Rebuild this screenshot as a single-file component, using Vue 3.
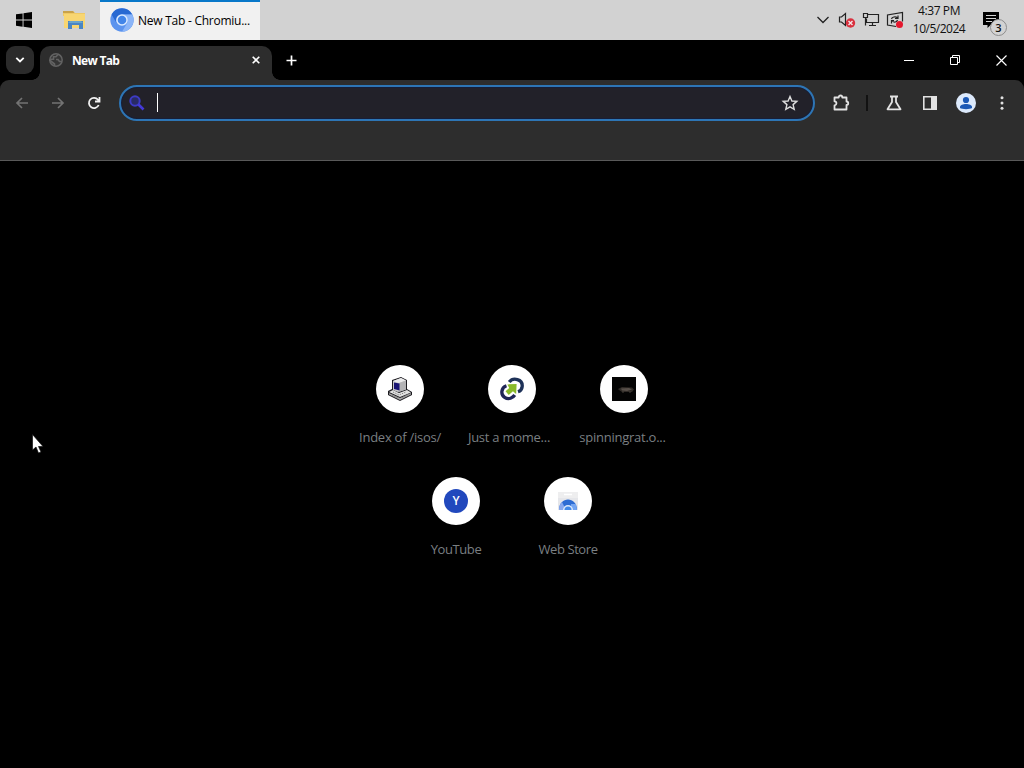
<template>
  <div class="desktop">
    <header class="taskbar">
      <button class="task start" aria-label="Start">
        <svg width="16" height="16" viewBox="0 0 16 16"><path d="M0 2.3 6.6 1.4V7.6H0ZM7.5 1.3 16 0V7.6H7.5ZM0 8.5H6.6V14.7L0 13.8ZM7.5 8.5H16V16L7.5 14.8Z" /></svg>
      </button>
      <button class="task explorer" aria-label="File Explorer">
        <svg width="24" height="20" viewBox="0 0 24 20">
          <path d="M1 1h10l2 2h10v3H1z" fill="#efc964" />
          <path d="M1 1h10l1.500 2H1z" fill="#c9a24a" />
          <path d="M2 4h21v14H2z" fill="#f8d672" />
          <path d="M6 11h15v8h-4v-4h-7v4H6z" fill="#4a86c4" />
          <path d="M8 11h11l2 2H6z" fill="#6aa5cc" />
        </svg>
      </button>
      <button class="task active">
        <svg width="24" height="24" viewBox="0 0 24 24">
          <circle cx="12" cy="12" r="11.700" fill="#5b93ee" />
          <path d="M1.600 6.500A11.700 11.700 0 0 1 22.200 6.500H12a6 6 0 0 0-5.200 9z" fill="#2869d2" />
          <path d="M22.200 6.500A11.700 11.700 0 0 1 12 23.700l5.200-8.700A6 6 0 0 0 12 6.500z" fill="#8bb5f8" />
          <circle cx="12" cy="12" r="5.800" fill="#dcebff" />
          <circle cx="12" cy="12" r="4.300" fill="#4285e8" />
        </svg>
        <span>New Tab - Chromiu...</span>
      </button>

      <div class="tray">
        <svg class="tray-arrow" width="14" height="10" viewBox="0 0 14 10"><path d="m1.500 2 5.500 5.500L12.500 2" fill="none" stroke="#222" stroke-width="1.300" /></svg>
        <svg width="18" height="16" viewBox="0 0 18 16">
          <path d="M1.500 5h2L7.500 1.500v12L3.500 10h-2z" fill="none" stroke="#222" stroke-width="1.200" />
          <circle cx="12.500" cy="11" r="4.700" fill="#d9303e" />
          <path d="m10.500 9 4 4m0-4-4 4" stroke="#f3e6e7" stroke-width="1.400" />
        </svg>
        <svg width="18" height="16" viewBox="0 0 18 16">
          <path d="M5 2.500h11.500v8H4.500v-4M10.500 10.500v3M7 13.500h7M1.500 1.500h4v4h-4zM3.500 5.500v8" fill="none" stroke="#222" stroke-width="1.200" />
        </svg>
        <svg width="18" height="18" viewBox="0 0 18 18">
          <path d="M10 15.500 1.500 14V4L16.500 1.500v9" fill="none" stroke="#222" stroke-width="1.200" />
          <path d="M5.500 8c.5-2 4-3 6-1M12 4.500v3H9M11.500 9c-.5 2-3.500 3-5 1M5.500 12.500v-3H8" fill="none" stroke="#222" stroke-width="1.200" />
          <circle cx="13.500" cy="13.500" r="3.500" fill="#e5172e" />
        </svg>
      </div>
      <div class="clock">
        <span class="time">4:37 PM</span>
        <span class="date">10/5/2024</span>
      </div>
      <div class="notifications">
        <svg width="17" height="17" viewBox="0 0 17 17"><path d="M0 0h16v13H7.500L4.500 16v-3H0z" /><path d="M3 3.500h10M3 6.500h10M3 9.500h6" stroke="#d3d3d3" stroke-width="1.200" /></svg>
        <span class="count">3</span>
      </div>
    </header>

    <main class="browser">
      <div class="tabstrip">
        <button class="tab-search" aria-label="Search tabs">
          <svg width="10" height="8" viewBox="0 0 10 8"><path d="m1.300 1.800 3.700 3.700 3.700-3.700" fill="none" stroke="#fff" stroke-width="1.800" /></svg>
        </button>
        <div class="tab">
          <svg width="14" height="14" viewBox="0 0 14 14">
            <circle cx="7" cy="7" r="6.200" fill="#353535" stroke="#626262" stroke-width="1.500" />
            <path d="M9 1.500 7 3.800H4.500v2.500H2L1 7.500 5.500 11v2M7 6.500h2l1.500 2h2.500" fill="none" stroke="#626262" stroke-width="1.600" />
          </svg>
          <span>New Tab</span>
          <svg class="close" width="8" height="8" viewBox="0 0 8 8"><path d="m.7.700 6.600 6.600m0-6.600L.7 7.300" stroke="#fff" stroke-width="1.600" /></svg>
        </div>
        <button class="new-tab" aria-label="New tab">
          <svg width="11" height="11" viewBox="0 0 11 11"><path d="M5.500.5v10M.5 5.500h10" stroke="#fff" stroke-width="1.700" /></svg>
        </button>
        <div class="window-controls">
          <svg width="10" height="10" viewBox="0 0 10 10"><path d="M0 5.500h10" stroke="#fff" /></svg>
          <svg width="10" height="10" viewBox="0 0 10 10"><path d="M.5 2.500h7v7h-7zM2.500 2.500v-2h7v7h-2" fill="none" stroke="#fff" /></svg>
          <svg width="11" height="11" viewBox="0 0 11 11"><path d="m.5.500 10 10m0-10-10 10" stroke="#fff" stroke-width="1.150" /></svg>
        </div>
      </div>

      <div class="toolbar">
        <nav class="navigation">
          <svg width="20" height="20" viewBox="0 0 20 20"><path d="M16 10H5m5-5-5 5 5 5" fill="none" stroke="#737373" stroke-width="1.700" /></svg>
          <svg width="20" height="20" viewBox="0 0 20 20"><path d="M4 10h11m-5-5 5 5-5 5" fill="none" stroke="#737373" stroke-width="1.700" /></svg>
          <svg width="20" height="20" viewBox="0 0 20 20"><path d="M14.700 12A5.100 5.100 0 1 1 14 6.700l1 1M15.500 4v4.500H11" fill="none" stroke="#f2f2f2" stroke-width="1.800" /></svg>
        </nav>
        <div class="omnibox">
          <svg class="search" width="18" height="18" viewBox="0 0 18 18"><circle cx="7" cy="7" r="4.700" fill="#292b65" stroke="#3d3bc4" stroke-width="2" /><path d="m10.500 10.500 5 5" stroke="#4439da" stroke-width="2.600" /></svg>
          <i class="caret"></i>
          <svg class="star" width="18" height="18" viewBox="0 0 18 18"><path d="m9 2.500 1.900 4.500 4.900.4-3.700 3.200 1.100 4.700L9 12.800l-4.200 2.500 1.100-4.700-3.700-3.200L7.100 7z" fill="none" stroke="#ddd" stroke-width="1.400" /></svg>
        </div>
        <svg class="extension" width="20" height="20" viewBox="0 0 20 20"><path d="M3.500 4.500h4.200C7.700 1.800 11.300 1.800 11.300 4.500h4.200v4c2.300 0 2.300 3.500 0 3.500v4.500h-12v-4c2.600-.5 2.600-4 0-4.200z" fill="none" stroke="#e2e2e2" stroke-width="1.800" stroke-linejoin="round" /></svg>
        <i class="divider"></i>
        <div class="actions">
          <svg width="20" height="20" viewBox="0 0 20 20"><path d="M6 3.500h8M8 4v5l-4.500 7.300h13L12 9V4" fill="none" stroke="#e2e2e2" stroke-width="1.800" stroke-linejoin="round" /></svg>
          <svg width="20" height="20" viewBox="0 0 20 20"><path d="M3.800 3.800h12.400v12.400H3.800z" fill="none" stroke="#e2e2e2" stroke-width="1.600" /><path d="M11 3h6v14h-6z" fill="#e2e2e2" /></svg>
          <svg width="20" height="20" viewBox="0 0 20 20"><circle cx="10" cy="10" r="10" fill="#dce9fb" /><circle cx="10" cy="7" r="3.100" fill="#1b58b5" /><path d="M4 15v-1c0-4 12-4 12 0v1c-2 1.500-10 1.500-12 0z" fill="#1b58b5" /></svg>
          <svg width="20" height="20" viewBox="0 0 20 20" fill="#e2e2e2"><circle cx="10" cy="4.800" r="1.500" /><circle cx="10" cy="10" r="1.500" /><circle cx="10" cy="15.200" r="1.500" /></svg>
        </div>
      </div>

      <section class="shortcuts">
        <a v-for="site in sites" :key="site.icon" class="shortcut" :class="site.icon">
          <span class="bubble">
            <svg v-if="site.icon === 'computer'" width="24" height="24" viewBox="0 0 24 24">
              <path d="M4 3 13 0l6 3v9l5 3v3l-12 6L0 18v-4l4-2z" fill="#1c1b20" />
              <path d="m5 4 8-3 5 2.500v9L10 15l-5-2z" fill="#c9c9cb" />
              <path d="m5 4 8-3 5 2.500-7 2.500z" fill="#e9e9ea" />
              <path d="m11 6 7-2.500v9L11 15z" fill="#b3b3b5" />
              <path d="m6 5.500 5.500 1v7l-5.500-1.500z" fill="#191473" />
              <path d="m1 15 4-2 6 3 8-3 4 2.500L12 20z" fill="#e2e2e2" />
              <path d="m1 16 11 5v2L1 17.500zM12 21l11-5v1.500L12 23z" fill="#a8a8a8" />
              <path d="m5 15 6 3 7-3M4 18l6 3M14 21l7-4" fill="none" stroke="#777" stroke-dasharray="1 1" />
            </svg>
            <svg v-else-if="site.icon === 'link'" width="24" height="24" viewBox="0 0 26 26">
              <path d="M10 5.500c4-5.500 15-3.500 14 5-.3 2.700-2 4.700-4.500 5.500" fill="none" stroke="#1d3158" stroke-width="3.600" />
              <path d="M7 9.500C1 11.500.5 19 5 22c4.500 3 9 .5 11-2.500" fill="none" stroke="#202657" stroke-width="3.600" />
              <path d="m8 8 10-.5-.5 11-3.500-3-4.500 4-3.500-4 4-3.500z" fill="#8abb2a" />
            </svg>
            <svg v-else-if="site.icon === 'rat'" width="24" height="24" viewBox="0 0 24 24">
              <path d="M0 0h24v24H0z" fill="#040404" />
              <path d="m6 12 4-2 10 .5 2 2-2 2.500H10l-3-2z" fill="#2f2a26" />
              <path d="m9 11.500 8-.5 3 1.500-5 1.500-5-.5z" fill="#58504a" /><path d="M10 15h2m5 0h2" stroke="#46413a" />
            </svg>
            <span v-else-if="site.icon === 'youtube'" class="letter">Y</span>
            <svg v-else width="22" height="20" viewBox="0 0 22 20">
              <path d="M1 1h20v18H1z" fill="#e5e6ea" /><path d="M1 1h20v6H1z" fill="#eeeeef" /><path d="M7 3.500h8" stroke="#fff" stroke-width="1.500" />
              <path d="M2 19C2 5 20 5 20 19z" fill="#2d6cd3" />
              <path d="M2 19c0-4 1-6 3-8l4 8z" fill="#87a8ee" /><path d="M14 13h5l1 6h-6z" fill="#72a4f2" />
              <path d="M6 19a5 5 0 0 1 10 0z" fill="#dae8fc" /><path d="M7.500 19a3.500 3.500 0 0 1 7 0z" fill="#4289e8" />
            </svg>
          </span>
          <span class="label">{{ site.title }}</span>
        </a>
      </section>
    </main>

    <svg class="cursor" width="13" height="20" viewBox="0 0 13 20"><path d="M.5.500v15.500l3.500-3 2.500 6 2.500-1-2.500-5.500H11z" fill="#fff" stroke="#111" stroke-width=".7" /></svg>
  </div>
</template>

<script setup>
const sites = [
  { title: 'Index of /isos/', icon: 'computer' },
  { title: 'Just a mome...', icon: 'link' },
  { title: 'spinningrat.o...', icon: 'rat' },
  { title: 'YouTube', icon: 'youtube' },
  { title: 'Web Store', icon: 'store' }
];
</script>

<style>
body {
  margin: 0;
  background: #000;
}
</style>

<style scoped>
* {
  box-sizing: border-box;
}

.desktop {
  position: relative;
  width: 1024px;
  height: 768px;
  overflow: hidden;
  background: #000;
  font-family: "Open Sans", "Noto Sans", sans-serif;
}

svg {
  display: block;
  flex: none;
}

button {
  border: 0;
  padding: 0;
  background: none;
  font: inherit;
}

.taskbar {
  display: flex;
  height: 40px;
  background: #d2d2d2;
  color: #111;
}

.task {
  display: flex;
  align-items: center;
  justify-content: center;
  height: 40px;
}

.start {
  width: 48px;
}

.explorer {
  width: 52px;
}

.active {
  width: 160px;
  justify-content: flex-start;
  gap: 4px;
  padding-left: 10px;
  border-top: 2px solid #0878c9;
  background: #f1f1f1;
  font-size: 12px;
  letter-spacing: -0.25px;
  white-space: nowrap;
}

.active svg,
.active span {
  margin-top: -2px;
}

.tray {
  display: flex;
  align-items: center;
  gap: 6px;
  margin-left: 556px;
}

.tray-arrow {
  margin-right: 2px;
}

.clock {
  display: flex;
  flex-direction: column;
  align-items: center;
  width: 60px;
  margin-left: 5px;
  padding-top: 2px;
  font-size: 12px;
  line-height: 18px;
  white-space: nowrap;
}

.time {
  letter-spacing: -0.4px;
}

.date {
  letter-spacing: -0.5px;
}

.notifications {
  position: relative;
  margin-left: auto;
  padding: 12px 24px 0 0;
}

.count {
  position: absolute;
  top: 19px;
  right: 17px;
  width: 17px;
  height: 17px;
  border: 1px solid #8d8d8d;
  border-radius: 50%;
  background: #d3d3d3;
  font-size: 11px;
  font-weight: 600;
  line-height: 15px;
  text-align: center;
}

.tabstrip {
  display: flex;
  align-items: center;
  height: 40px;
}

.tab-search {
  display: flex;
  align-items: center;
  justify-content: center;
  width: 28px;
  height: 28px;
  margin-left: 6px;
  border-radius: 9px;
  background: #2b2b2b;
}

.tab {
  position: relative;
  display: flex;
  align-items: center;
  align-self: flex-end;
  width: 232px;
  height: 34px;
  margin-left: 6px;
  padding: 0 12px 6px 9px;
  border-radius: 10px 10px 0 0;
  background: #2d2d2d;
  color: #fff;
  font-size: 12px;
  font-weight: 700;
  letter-spacing: -0.7px;
}

.tab::before,
.tab::after {
  content: "";
  position: absolute;
  bottom: 0;
  width: 8px;
  height: 8px;
}

.tab::before {
  left: -8px;
  background: radial-gradient(circle at 0 0, transparent 7.5px, #2d2d2d 8px);
}

.tab::after {
  right: -8px;
  background: radial-gradient(circle at 100% 0, transparent 7.5px, #2d2d2d 8px);
}

.tab span {
  margin-left: 9px;
}

.close {
  margin-left: auto;
}

.new-tab {
  margin-left: 14px;
}

.window-controls {
  display: flex;
  align-items: center;
  gap: 36px;
  margin-left: auto;
  padding-right: 17px;
}

.toolbar {
  display: flex;
  align-items: flex-start;
  height: 81px;
  padding: 5px 12px 0;
  border-bottom: 1px solid #595959;
  border-radius: 9px 9px 0 0;
  background: #2d2d2d;
}

.navigation {
  display: flex;
  gap: 16px;
  padding-top: 8px;
}

.omnibox {
  display: flex;
  align-items: center;
  width: 696px;
  height: 36px;
  margin-left: 15px;
  padding: 0 14px 0 7px;
  border: 2px solid #2d75b5;
  border-radius: 18px;
  background: #222129;
  box-shadow: inset 0 0 0 1px #171e38;
}

.caret {
  width: 1px;
  height: 19px;
  margin: -2px 0 0 11px;
  background: #fff;
}

.star {
  margin-left: auto;
}

.extension {
  margin: 8px 0 0 16px;
}

.divider {
  width: 2px;
  height: 16px;
  margin: 10px 0 0 15px;
  background: #121212;
}

.actions {
  display: flex;
  gap: 16px;
  margin: 8px 0 0 16px;
}

.shortcuts {
  display: flex;
  flex-wrap: wrap;
  justify-content: center;
  width: 336px;
  margin: 188px auto 0;
}

.shortcut {
  display: flex;
  flex-direction: column;
  align-items: center;
  width: 112px;
  height: 112px;
  padding-top: 16px;
}

.bubble {
  display: flex;
  align-items: center;
  justify-content: center;
  width: 48px;
  height: 48px;
  border-radius: 50%;
  background: #fff;
}

.label {
  margin-top: 15px;
  color: #7a7f82;
  font-size: 13px;
  line-height: 18px;
  letter-spacing: -0.25px;
  white-space: nowrap;
}

.link .label {
  margin-left: -6px;
}

.rat .label {
  margin-left: -3px;
}

.youtube .label,
.store .label {
  letter-spacing: -0.4px;
}

.letter {
  width: 24px;
  height: 24px;
  border-radius: 50%;
  background: #2148bd;
  color: #fff;
  font-size: 12px;
  font-weight: 600;
  line-height: 24px;
  text-align: center;
}

.cursor {
  position: absolute;
  left: 32px;
  top: 434px;
}
</style>
